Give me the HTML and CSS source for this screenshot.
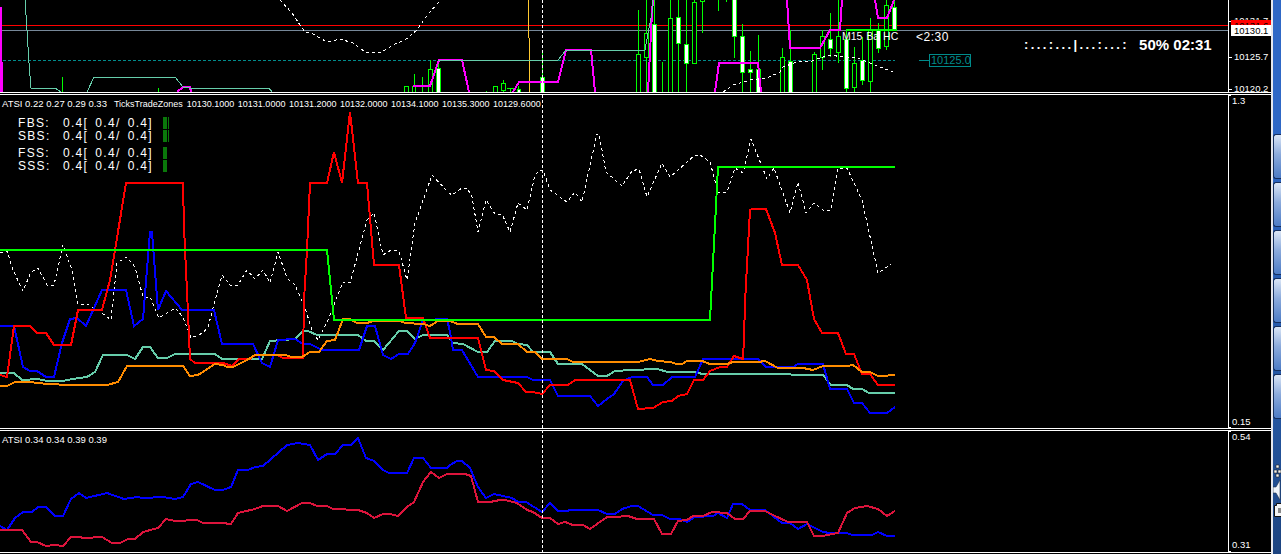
FILE: index.html
```html
<!DOCTYPE html>
<html lang="en">
<head>
    <meta charset="UTF-8">
    <meta name="viewport" content="width=device-width, initial-scale=1.0">
    <title>EURUSD M15 chart</title>
    <link rel="stylesheet" href="styles.css">
</head>
<body>
    <div class="terminal">
        <section class="pane pane-price">
            <div class="chart">
                <svg class="plot" width="1228" height="92" viewBox="0 0 1228 92">
                    <path class="level-red" d="M0 25.5H1228"/>
                    <path class="level-grey" d="M0 30.5H1228"/>
                    <path class="level-teal" d="M3 60.5H895"/>
                    <path class="level-stub" d="M919 60.5H929"/>
                    <path class="line-yellow" d="M528.5 0V38M529.5 38V92"/>

                    <path class="wick" d="M62.5 77V92M158.5 88V92M414.5 74V92M422.5 77V92M430.5 60V92M438.5 60V92M486.5 91V92M503.5 80V92M510.5 88V92M507 88.5H514M518.5 86V92M542.5 50V92M638.5 10V92M646.5 0V92M654.5 0V92M662.5 62V92M670.5 0V92M678.5 0V92M686.5 0V92M694.5 0V63M702.5 0V33M718.5 0V11M726.5 0V2M734.5 0V58M742.5 24V92M750.5 51V92M758.5 35V92M782.5 48V92M790.5 30V92M814.5 52V92M822.5 30V70M830.5 13V57M838.5 0V63M846.5 29V92M854.5 47V92M862.5 37V85M870.5 18V92M878.5 23V53M886.5 0V50M894.5 0V30"/>
                    <g class="bull">
                        <rect x="404.5" y="86.5" width="4" height="8"/>
                        <rect x="412.5" y="86.5" width="3" height="8"/>
                        <rect x="428.5" y="69.5" width="4" height="25"/>
                        <rect x="493.5" y="86.5" width="4" height="8"/>
                        <rect x="501.5" y="83.5" width="4" height="7"/>
                        <rect x="636.5" y="54.5" width="4" height="40"/>
                        <rect x="644.5" y="33.5" width="4" height="24"/>
                        <rect x="668.5" y="18.5" width="4" height="76"/>
                        <rect x="692.5" y="2.5" width="4" height="61"/>
                        <rect x="700.5" y="-3.5" width="4" height="5"/>
                        <rect x="780.5" y="57.5" width="4" height="37"/>
                        <rect x="812.5" y="54.5" width="4" height="40"/>
                        <rect x="820.5" y="36.5" width="4" height="21"/>
                        <rect x="836.5" y="36.5" width="4" height="16"/>
                        <rect x="852.5" y="63.5" width="4" height="24"/>
                        <rect x="868.5" y="30.5" width="4" height="51"/>
                        <rect x="884.5" y="5.5" width="4" height="41"/>
                    </g>
                    <g class="bear">
                        <rect x="436.5" y="68.5" width="4" height="26"/>
                        <rect x="517.5" y="89.5" width="3" height="5"/>
                        <rect x="540.5" y="77.5" width="4" height="17"/>
                        <rect x="652.5" y="24.5" width="4" height="70"/>
                        <rect x="676.5" y="17.5" width="4" height="26"/>
                        <rect x="684.5" y="44.5" width="4" height="19"/>
                        <rect x="732.5" y="-3.5" width="4" height="40"/>
                        <rect x="740.5" y="36.5" width="4" height="36"/>
                        <rect x="748.5" y="69.5" width="4" height="3"/>
                        <rect x="756.5" y="69.5" width="4" height="25"/>
                        <rect x="788.5" y="61.5" width="4" height="33"/>
                        <rect x="828.5" y="39.5" width="4" height="9"/>
                        <rect x="844.5" y="39.5" width="4" height="49"/>
                        <rect x="860.5" y="60.5" width="4" height="20"/>
                        <rect x="876.5" y="30.5" width="4" height="18"/>
                        <rect x="892.5" y="7.5" width="4" height="23"/>
                    </g>

                    <polyline class="line-magenta" points="177,92 183,87 190,87 191,92"/>
                    <polyline class="line-magenta" points="413,86 430,86 439,60 462,60 469,92"/>
                    <polyline class="line-magenta" points="513,92 519,82 558,82 566,50 591,50 595,92"/>
                    <polyline class="line-magenta" points="648,92 652,13 653,0"/>
                    <polyline class="line-magenta" points="715,92 719,63 758,63 761,92"/>
                    <polyline class="line-magenta" points="787,0 790,48 820,48 830,30 840,30 842,0"/>
                    <polyline class="line-magenta" points="875,0 878,18 887,18 894,0"/>
                    <path class="line-magenta" d="M0.5 7V92"/>
                    <path class="line-magenta" d="M1.5 62V92"/>

                    <polyline class="line-aqua thin" points="25,0 27,30 29,63 31,88 55,88 61,92"/>
                    <polyline class="line-aqua thin" points="87,92 94,77 175,77 183,87 190,88 269,88 272,92"/>
                    <polyline class="line-aqua thin" points="438,60 558,60 566,50 645,50 648,33 652,13 653,0"/>

                    <polyline class="line-dash" points="280,0 292,13 300,25 305,32 313,34 327,42 340,39 353,43 365,52 382,52 393,45 405,40 417,30 428,14 441,0"/>
                    <polyline class="line-dash" points="723,92 733,85 750,80 767,78 780,72 783,67 797,62 812,61 820,58 830,55 843,57 857,58 870,63 893,72"/>
                    <path class="line-green" d="M847 29.5H896"/>
                </svg>
                <span class="bar-label">M15 Ba HC</span>
                <span class="bar-timer">&lt;2:30</span>
                <span class="level-box">10125.0</span>
                <div class="progress">
                    <span class="progress-dots">:...:...|...:...:</span>
                    <span class="progress-time">50% 02:31</span>
                </div>
            </div>
            <div class="axis axis-price">
                <span class="axis-label">10131.7</span>
                <span class="axis-label">10125.7</span>
                <span class="axis-label">10120.2</span>
                <span class="price-tag tag-red">10131.6</span>
                <span class="price-tag tag-white">10130.1</span>
            </div>
        </section>

        <section class="pane pane-zones">
            <div class="chart">
                <svg class="plot" width="1228" height="333" viewBox="0 95 1228 333">
                    <polyline class="line-dash" points="0,253 7,251 13,270 23,291 31,272 38,268 47,285 54,285 63,245 72,270 78,304 87,304 102,313 111,320 117,263 127,257 135,267 143,297 150,297 159,318 175,308 183,317 191,338 203,333 208,327 222,275 230,285 238,285 247,270 255,279 263,270 270,283 278,252 287,278 295,285 305,308 313,333 318,340 328,320 343,282 350,283 367,220 374,213 383,255 391,250 399,251 407,280 415,223 432,175 448,192 452,195 462,188 467,188 472,197 478,232 486,200 495,214 502,214 510,232 518,203 527,210 535,175 540,170 543,170 550,190 567,202 575,192 582,202 590,165 597,134 599,134 606,172 622,186 632,171 639,169 647,197 662,163 670,177 687,162 695,155 700,155 710,162 718,192 727,192 735,168 743,173 751,139 767,179 774,168 790,213 798,182 806,213 814,203 823,210 831,210 838,168 847,168 862,200 878,273 883,270 891,264"/>
                    <polyline class="line-aqua" points="0,373 14,373 22,380 38,379 47,381 63,381 72,379 87,377 95,372 103,355 127,355 135,359 143,347 150,347 158,358 167,358 175,354 215,354 222,359 262,359 270,341 295,339 303,331 308,331 317,335 358,335 366,341 374,341 383,350 399,331 407,331 415,339 423,335 447,335 453,343 463,344 478,352 487,352 495,341 512,341 518,344 527,345 533,352 550,352 558,364 582,364 598,376 607,376 615,371 632,370 657,369 668,372 693,372 703,374 790,374 792,375 823,375 831,385 847,385 853,389 862,389 869,393 895,393"/>
                    <polyline class="line-blue" points="0,326 14,326 23,367 30,371 37,371 46,377 54,377 62,343 70,319 77,318 86,326 102,290 126,290 134,326 143,319 150,232 152,232 158,310 166,291 182,310 214,310 222,344 253,344 262,363 270,367 278,340 295,339 303,344 310,344 322,350 359,350 367,326 375,326 383,355 391,359 399,354 408,354 415,343 423,320 447,319 450,332 453,350 462,350 478,377 527,377 533,380 550,380 558,396 590,396 598,406 607,399 614,394 623,381 632,377 647,377 653,385 663,385 672,377 695,377 703,359 758,359 766,367 793,367 798,364 823,364 830,389 847,389 854,403 862,403 870,413 887,413 895,407"/>
                    <polyline class="line-red" points="0,375 7,377 14,326 30,326 37,333 46,333 54,345 71,345 78,310 102,310 110,280 115,250 126,183 183,183 184,227 188,313 190,359 195,363 223,363 232,366 239,359 250,359 255,355 277,355 283,358 303,358 304,300 307,250 310,183 327,183 334,152 342,183 350,112 358,183 367,183 374,265 399,265 406,318 423,318 430,338 478,338 486,370 494,371 503,380 518,383 526,392 533,392 542,394 550,385 568,385 575,380 630,380 638,409 653,408 663,402 672,401 678,396 687,394 694,380 703,380 710,371 720,367 727,367 734,356 743,359 744,338 745,303 747,265 750,210 752,209 766,209 775,233 782,265 798,265 807,280 814,319 822,333 838,333 846,354 854,354 862,374 870,374 878,385 895,385"/>
                    <polyline class="line-orange" points="0,386 7,386 15,382 30,382 47,384 70,385 107,385 118,382 127,366 183,366 190,376 198,375 215,364 223,365 227,367 233,367 247,360 255,355 285,355 292,357 302,357 310,352 319,352 327,341 335,340 343,319 350,319 357,323 367,323 373,321 400,321 405,323 423,324 430,326 438,321 450,321 458,324 478,324 486,337 494,337 502,344 518,344 527,352 535,352 542,359 567,359 573,362 638,362 650,359 658,361 670,362 677,364 682,364 687,361 702,361 710,364 727,364 733,362 758,362 765,361 778,368 803,368 813,370 823,366 847,366 853,365 862,372 870,372 878,376 887,376 889,375 895,375"/>
                    <polyline class="line-lime" points="0,250 327,250 334,320 710,320 718,167 895,167"/>
                </svg>
                <div class="indicator-title">
                    <span>ATSI 0.22 0.27 0.29 0.33</span>
                    <span class="zone-name">TicksTradeZones</span>
                    <span class="zone-values">10130.1000 10131.0000 10131.2000 10132.0000 10134.1000 10135.3000 10129.6000</span>
                </div>
                <div class="signals">
                    <div class="signal-group">
                        <div class="signal-row"><span class="signal-name">FBS:</span><span class="signal-value">0.4[ 0.4/ 0.4]</span><span class="signal-bar"></span><span class="signal-tick"></span></div>
                        <div class="signal-row"><span class="signal-name">SBS:</span><span class="signal-value">0.4[ 0.4/ 0.4]</span><span class="signal-bar"></span><span class="signal-tick"></span></div>
                    </div>
                    <div class="signal-group">
                        <div class="signal-row"><span class="signal-name">FSS:</span><span class="signal-value">0.4[ 0.4/ 0.4]</span><span class="signal-bar"></span></div>
                        <div class="signal-row"><span class="signal-name">SSS:</span><span class="signal-value">0.4[ 0.4/ 0.4]</span><span class="signal-bar"></span></div>
                    </div>
                </div>
            </div>
            <div class="axis axis-scale">
                <span class="axis-label">1.3</span>
                <span class="axis-label">0.15</span>
            </div>
        </section>

        <section class="pane pane-atsi">
            <div class="chart">
                <svg class="plot" width="1228" height="121" viewBox="0 431 1228 121">
                    <polyline class="line-blue" points="0,526 7,530 15,518 23,512 32,512 38,507 46,507 55,516 63,516 71,499 79,493 86,498 107,493 124,499 137,497 143,498 163,497 175,499 183,497 191,484 198,482 215,490 223,490 231,487 238,470 248,470 255,467 263,466 287,445 298,443 310,445 318,460 327,454 335,454 343,445 351,445 358,438 366,458 374,461 383,470 389,473 407,473 414,458 423,458 431,468 447,468 450,465 457,461 462,461 470,468 478,487 486,498 494,494 512,498 518,502 526,502 542,512 550,503 558,511 567,511 570,510 598,510 607,514 615,514 622,509 632,506 638,506 653,515 662,515 670,519 680,519 687,522 695,517 713,516 718,513 727,518 733,504 742,504 750,510 765,510 782,523 790,523 798,529 807,524 823,532 830,533 847,533 852,535 872,535 878,532 887,536 895,536"/>
                    <polyline class="line-crimson" points="0,530 22,530 31,542 37,542 46,546 55,545 63,546 71,537 78,537 85,538 102,537 112,543 120,543 128,539 135,539 143,532 158,528 166,519 175,521 197,520 203,523 222,523 231,524 238,513 255,509 263,506 278,506 287,511 302,503 310,503 317,506 327,506 333,509 358,510 367,513 374,518 383,514 390,514 398,516 407,507 414,502 423,482 431,472 439,478 447,474 465,474 471,476 478,502 490,502 500,500 505,500 517,503 527,510 533,512 542,518 550,518 558,524 565,522 573,525 583,525 590,529 607,517 615,517 628,516 637,519 654,519 662,534 671,534 678,521 687,520 693,516 703,516 712,512 727,513 735,519 743,519 750,511 765,511 773,515 788,522 807,522 814,536 822,536 838,533 847,513 855,508 867,506 878,509 887,516 895,511"/>
                </svg>
                <div class="indicator-title">
                    <span>ATSI 0.34 0.34 0.39 0.39</span>
                </div>
            </div>
            <div class="axis axis-scale">
                <span class="axis-label">0.54</span>
                <span class="axis-label">0.31</span>
            </div>
        </section>

        <div class="crosshair"></div>
    </div>

    <aside class="taskbar">
        <div class="task-buttons">
            <div class="task-button"></div>
            <div class="task-button"></div>
            <div class="task-button"></div>
            <div class="task-button"></div>
            <div class="task-button"></div>
            <div class="task-button"></div>
        </div>
        <div class="tray">
            <svg width="8" height="14" viewBox="0 0 8 14">
                <path d="M3 1h3v3H3zM1 6h3v3H1zM5 6h3v3H5zM3 10h3v3H3z" fill="#f2f2f2" stroke="#222" stroke-width=".6"/>
            </svg>
            <svg width="8" height="22" viewBox="0 0 8 22">
                <path d="M0 8h3l4-7v20l-4-7H0z" fill="#eef2f8" stroke="#24324a" stroke-width=".6"/>
            </svg>
            <svg width="8" height="16" viewBox="0 0 8 16">
                <path d="M1.500 3.500h2v-2h5v13h-7z" fill="#f4f4f4" stroke="#111"/>
                <path d="M5 6h3v5H5z" fill="#8a8a8a"/>
            </svg>
        </div>
    </aside>
</body>
</html>
```

FILE: styles.css
```css
* {
    box-sizing: border-box;
}

html, body {
    height: 554px;
    overflow: hidden;
}

body {
    margin: 0;
    display: flex;
    background: #000;
    color: #fff;
    font-family: "Liberation Sans", Arial, sans-serif;
    font-size: 9.5px;
}

.terminal {
    position: relative;
    display: flex;
    flex-direction: column;
    gap: 1px;
    width: 1271px;
    flex: none;
}

.taskbar {
    flex: 1;
    height: 554px;
    border-left: 2px solid #e6e8ee;
    background: linear-gradient(#2f68c6 0, #2f68c6 120px, #24559f 420px, #1d4480 554px);
    display: flex;
    flex-direction: column;
    justify-content: space-between;
    padding: 134px 0 36px;
}

.task-buttons {
    display: flex;
    flex-direction: column;
    gap: 3px;
}

.task-button {
    height: 45px;
    border: 1px solid #16305f;
    border-right: none;
    border-radius: 3px 0 0 3px;
    background: linear-gradient(#dbe6f6, #8cabdc 45%, #4d7cc6);
}

.tray {
    display: flex;
    flex-direction: column;
    gap: 1px;
}

.tray svg {
    display: block;
}

/* panes */
.pane {
    display: flex;
    flex: none;
    border-bottom: 1px solid #fff;
}

.pane-price {
    height: 93px;
}

.pane-zones {
    height: 335px;
    border-top: 1px solid #fff;
}

.pane-atsi {
    height: 123px;
    border-top: 1px solid #fff;
}

.chart {
    position: relative;
    width: 1228px;
    flex: none;
    overflow: hidden;
}

.plot {
    display: block;
    shape-rendering: crispEdges;
}

.plot polyline, .plot path {
    fill: none;
}

.crosshair {
    position: absolute;
    top: 0;
    left: 542px;
    width: 1px;
    height: 553px;
    background: repeating-linear-gradient(#fff 0, #fff 3px, transparent 3px, transparent 5px);
}

/* series */
.level-red {
    stroke: #f00;
}

.level-grey {
    stroke: #778899;
}

.level-teal {
    stroke: #008b8b;
    stroke-dasharray: 3 2;
}

.level-stub {
    stroke: #008b8b;
}

.line-yellow {
    stroke: #ffc930;
}

.wick {
    stroke: #0f0;
}

.bull rect, .bear rect {
    stroke: #0f0;
}

.bull rect {
    fill: #000;
}

.bear rect {
    fill: #fff;
}

.line-magenta {
    stroke: #f0f;
    stroke-width: 2;
}

.line-aqua {
    stroke: #66cdaa;
    stroke-width: 2;
}

.line-aqua.thin {
    stroke-width: 1;
}

.line-dash {
    stroke: #fff;
    stroke-dasharray: 3 3;
}

.line-green {
    stroke: #0f0;
    stroke-width: 2;
}

.line-blue {
    stroke: #00f;
    stroke-width: 2;
}

.line-red {
    stroke: #f00;
    stroke-width: 2;
}

.line-orange {
    stroke: #ff8c00;
    stroke-width: 2;
}

.line-lime {
    stroke: #0f0;
    stroke-width: 2;
}

.line-crimson {
    stroke: #dc143c;
    stroke-width: 2;
}

/* labels on the price chart */
.bar-label, .bar-timer, .level-box, .progress {
    position: absolute;
    white-space: nowrap;
}

.bar-label {
    left: 842px;
    top: 30px;
    font-size: 10.5px;
    word-spacing: 1px;
}

.bar-timer {
    left: 916px;
    top: 30px;
    font-size: 12px;
    letter-spacing: 0.5px;
}

.level-box {
    left: 929px;
    top: 54px;
    width: 42px;
    height: 13px;
    border: 1px solid #008b8b;
    color: #008b8b;
    font-size: 11px;
    line-height: 11px;
    padding-left: 1px;
}

.progress {
    left: 1024px;
    top: 36px;
    display: flex;
    align-items: center;
    gap: 10px;
    font-weight: bold;
}

.progress-dots {
    font-size: 13px;
    letter-spacing: 2.4px;
}

.progress-time {
    font-size: 15px;
}

/* indicator text */
.indicator-title {
    position: absolute;
    left: 2px;
    top: 3px;
    display: flex;
    align-items: baseline;
    gap: 7px;
    white-space: nowrap;
}

.zone-name {
    font-size: 9px;
    margin-right: -3px;
}

.zone-values {
    font-size: 9px;
    word-spacing: 1px;
}

.signals {
    position: absolute;
    left: 18px;
    top: 22px;
    display: flex;
    flex-direction: column;
    gap: 4px;
}

.signal-group {
    display: flex;
    flex-direction: column;
}

.signal-row {
    display: flex;
    align-items: flex-start;
    height: 13px;
    line-height: 13px;
    font-size: 12px;
    letter-spacing: 1.3px;
    white-space: pre;
}

.signal-name {
    width: 45px;
}

.signal-value {
    width: 100px;
    word-spacing: 2.5px;
}

.signal-bar {
    width: 4px;
    height: 12px;
    background: #0a780a;
}

.signal-tick {
    width: 1px;
    height: 12px;
    margin-left: 1px;
    background: #0a780a;
}

/* axes */
.axis {
    position: relative;
    flex: 1;
    display: flex;
    flex-direction: column;
    border-left: 1px solid #fff;
}

.axis-label {
    height: 12px;
    line-height: 12px;
    white-space: nowrap;
}

.axis-price {
    padding: 15px 0 0 5px;
    gap: 20px;
}

.axis-price .axis-label:first-child {
    margin-bottom: 4px;
}

.axis-price .axis-label::before {
    content: "";
    position: absolute;
    left: 0;
    width: 3px;
    height: 1px;
    margin-top: 6px;
    background: #fff;
}

.axis-scale {
    justify-content: space-between;
    padding: 0 0 0 3px;
}

.axis-scale::before, .axis-scale::after {
    content: "";
    position: absolute;
    left: 0;
    width: 2px;
    height: 1px;
    background: #fff;
}

.axis-scale::before {
    top: 0;
}

.axis-scale::after {
    bottom: 0;
}

.pane-atsi .axis-scale {
    padding-bottom: 1px;
}

.price-tag {
    position: absolute;
    left: 2px;
    width: 40px;
    height: 11px;
    padding-left: 3px;
    line-height: 11px;
    color: #000;
    overflow: hidden;
}

.tag-red {
    top: 20px;
    background: #f00;
}

.tag-white {
    top: 25px;
    background: #fff;
}
```
